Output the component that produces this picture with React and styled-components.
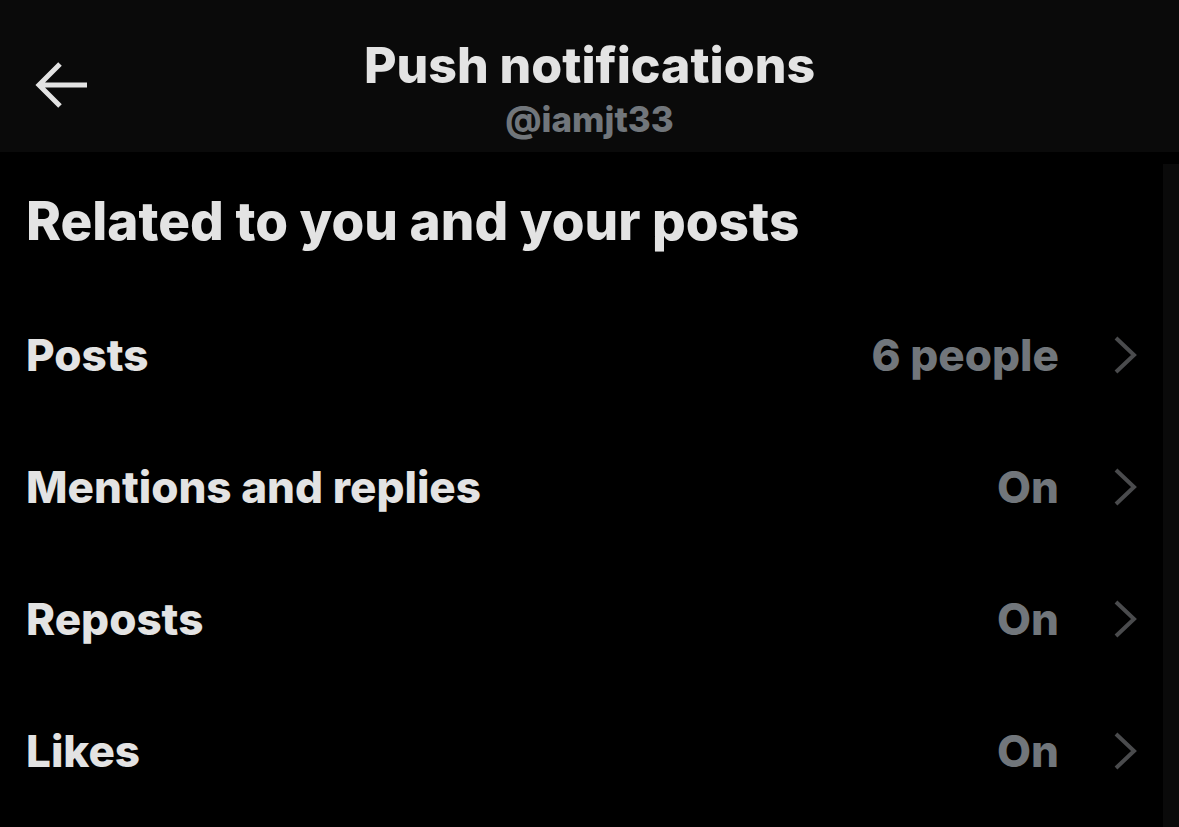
import React from 'react';
import styled, { createGlobalStyle } from 'styled-components';

const Global = createGlobalStyle`
  html, body {
    margin: 0;
    padding: 0;
    background: #000;
  }
  body {
    font-family: Inter, "Noto Sans", "Liberation Sans", sans-serif;
    -webkit-font-smoothing: antialiased;
  }
`;

const Screen = styled.div`
  width: 1179px;
  height: 827px;
  overflow: hidden;
  background: #000;
  display: flex;
  flex-direction: column;
`;

const Header = styled.header`
  height: 152px;
  flex-shrink: 0;
  background: #0a0a0a;
  display: grid;
  grid-template-columns: 1fr auto 1fr;
  align-items: center;
`;

const BackButton = styled.button`
  justify-self: start;
  margin-left: 35px;
  margin-top: 18px;
  padding: 0;
  border: 0;
  background: none;
  display: flex;
  cursor: pointer;
`;

const TitleBlock = styled.div`
  display: flex;
  flex-direction: column;
  align-items: center;
  margin-top: 22px;
`;

const Title = styled.h1`
  margin: 0;
  font-size: 50px;
  font-weight: 800;
  line-height: 64px;
  color: #e3e3e3;
`;

const Handle = styled.div`
  font-size: 35px;
  font-weight: 800;
  line-height: 44px;
  color: #71767b;
`;

const Body = styled.div`
  flex: 1;
  display: grid;
  grid-template-columns: 1fr 16px;
`;

const Content = styled.main`
  display: flex;
  flex-direction: column;
`;

const ScrollTrack = styled.div`
  margin-top: 12px;
  background: #0a0a0a;
`;

const SectionTitle = styled.h2`
  margin: 0;
  padding: 37px 0 0 26px;
  height: 137px;
  box-sizing: border-box;
  font-size: 53px;
  font-weight: 800;
  line-height: 64px;
  color: #e3e3e3;
`;

const Row = styled.div`
  height: 132px;
  display: flex;
  align-items: center;
  padding: 0 26px 0 26px;
`;

const Label = styled.span`
  flex: 1;
  font-size: 44px;
  font-weight: 800;
  color: #e3e3e3;
`;

const Value = styled.span`
  font-size: 44px;
  font-weight: 800;
  color: #71767b;
  margin-right: 54px;
`;

const Chevron = styled.svg`
  width: 24px;
  height: 38px;
  flex-shrink: 0;
`;

const rows = [
  { label: 'Posts', value: '6 people' },
  { label: 'Mentions and replies', value: 'On' },
  { label: 'Reposts', value: 'On' },
  { label: 'Likes', value: 'On' },
];

const ArrowLeft = () => (
  <svg width="56" height="48" viewBox="0 0 56 48" fill="none">
    <path d="M52 24H4M25 3L4 24l21 21" stroke="#e3e3e3" strokeWidth="5" strokeLinecap="butt" strokeLinejoin="miter" />
  </svg>
);

const App = () => {
  return (
    <>
      <Global />
      <Screen>
        <Header>
          <BackButton aria-label="Back">
            <ArrowLeft />
          </BackButton>
          <TitleBlock>
            <Title>Push notifications</Title>
            <Handle>@iamjt33</Handle>
          </TitleBlock>
          <div />
        </Header>
        <Body>
          <Content>
            <SectionTitle>Related to you and your posts</SectionTitle>
            {rows.map((item, key) => (
              <Row key={key}>
                <Label>{item.label}</Label>
                <Value>{item.value}</Value>
                <Chevron viewBox="0 0 24 38" fill="none">
                  <path d="M3 2l18 17L3 36" stroke="#4a4b4d" strokeWidth="4" />
                </Chevron>
              </Row>
            ))}
          </Content>
          <ScrollTrack />
        </Body>
      </Screen>
    </>
  );
};

export default App;
